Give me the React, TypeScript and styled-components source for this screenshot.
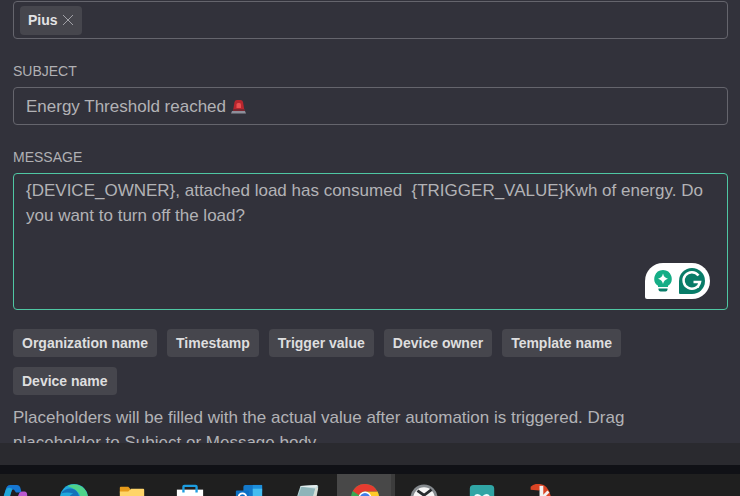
import React, { useState } from "react";
import styled, { createGlobalStyle } from "styled-components";

const GlobalStyle = createGlobalStyle`
  * { box-sizing: border-box; }
  body {
    margin: 0;
    background: #32323b;
    color: #b2b2b6;
    font-family: "Liberation Sans", Arial, sans-serif;
  }
  button, input, textarea { font: inherit; color: inherit; }
`;

const Screen = styled.div`
  height: 100vh;
  display: flex;
  flex-direction: column;
  overflow: hidden;
`;

const Form = styled.form`
  flex: 1;
  min-height: 0;
  overflow: hidden;
  display: flex;
  flex-direction: column;
  padding: 1px 12px 0 13px;
`;

const Label = styled.label`
  margin: 22px 0 6px;
  font-size: 14px;
  line-height: 20px;
  color: #b0b0b4;
`;

const Field = styled.div`
  display: flex;
  align-items: center;
  height: 38px;
  flex: none;
  padding: 0 6px;
  border: 1px solid #65656d;
  border-radius: 4px;
`;

const SubjectField = styled(Field)`
  padding: 2px 12px 0;
  gap: 5px;
`;

const Tag = styled.span`
  display: flex;
  align-items: center;
  gap: 4px;
  height: 29px;
  padding: 0 8px;
  border-radius: 4px;
  background: #46464d;
  color: #e2e2e4;
  font-size: 14px;
  font-weight: 700;
`;

const RemoveButton = styled.button`
  display: flex;
  padding: 0;
  border: 0;
  background: none;
  color: #a0a0a6;
`;

const RecipientInput = styled.input`
  flex: 1;
  min-width: 0;
  border: 0;
  outline: 0;
  background: none;
`;

const SubjectInput = styled.input`
  field-sizing: content;
  height: 26px;
  padding: 0;
  border: 0;
  outline: 0;
  background: none;
  font-size: 17px;
`;

const MessageBox = styled.div`
  position: relative;
  display: flex;
  flex: none;
`;

const MessageInput = styled.textarea`
  width: 100%;
  height: 137px;
  padding: 4px 12px;
  border: 1px solid #4fc7a3;
  border-radius: 4px;
  outline: 0;
  resize: none;
  background: none;
  font-size: 17px;
  line-height: 25px;
`;

const Assistant = styled.div`
  position: absolute;
  right: 18px;
  bottom: 11px;
  display: flex;
  align-items: center;
  gap: 7px;
  height: 36px;
  padding: 0 5px 0 9px;
  border-radius: 18px 18px 18px 2px;
  background: #ffffff;
`;

const AssistantButton = styled.button`
  display: flex;
  padding: 0;
  border: 0;
  background: none;
`;

const Chips = styled.div`
  display: flex;
  flex-wrap: wrap;
  gap: 10px;
  margin-top: 19px;
`;

const Chip = styled.button`
  height: 28px;
  padding: 0 9px;
  border: 0;
  border-radius: 4px;
  background: #46464d;
  color: #dededf;
  font-size: 14px;
  font-weight: 700;
`;

const Hint = styled.p`
  margin: 10px 0 0;
  max-width: 680px;
  font-size: 17px;
  line-height: 25px;
`;

const Footer = styled.div`
  flex: none;
  height: 22px;
  background: #2a2a2f;
`;

const WindowEdge = styled.div`
  flex: none;
  height: 9px;
  background: #101116;
`;

const Taskbar = styled.nav`
  flex: none;
  display: flex;
  height: 22px;
  margin-left: -13px;
  overflow: hidden;
  background: #1f1f1f;
`;

const TaskButton = styled.button<{ $active?: boolean }>`
  flex: none;
  width: 7.75%;
  display: flex;
  justify-content: center;
  height: 48px;
  padding: 10px 0 0 2px;
  border: 0;
  border-right: 4px solid ${(p) => (p.$active ? "#3c3c3c" : "transparent")};
  background: ${(p) => (p.$active ? "#484848" : "none")};
  background-clip: padding-box;
`;

const Siren = () => (
  <svg width="15" height="14" viewBox="0 0 15 14" role="img" aria-label="Siren">
    <path d="M2 11 3.500 2Q4 0 6 0h3.500Q11.500 0 12 2l1.500 9z" fill="#b8262e" />
    <path d="M5.500 8V4.500q0-1.500 1.500-1.500h1.500Q10 3 10 4.500V8z" fill="#ea4f50" />
    <path d="M2 9h11.500v2H2z" fill="#7c2730" />
    <path d="M1 11h13l1 2.500H0z" fill="#8d8f9b" />
  </svg>
);

const Bulb = () => (
  <svg width="18" height="22" viewBox="0 0 18 22" aria-hidden="true">
    <path d="M9 0a8.700 8.700 0 0 0-5 15.800V17h10v-1.200A8.700 8.700 0 0 0 9 0z" fill="#15ad86" />
    <path d="M9 3.500q1 4.500 5 5.200-4 .8-5 5.300-1-4.500-5-5.300 4-.7 5-5.200z" fill="#fff" />
    <path d="M4.500 18.500h9v1q0 2-2 2h-5q-2 0-2-2z" fill="#087c68" />
  </svg>
);

const Grammar = () => (
  <svg width="26" height="26" viewBox="0 0 26 26" aria-hidden="true">
    <path d="M13 0a13 13 0 1 1 0 26H1q-1 0-1-1V13A13 13 0 0 1 13 0z" fill="#087c68" />
    <path d="M19.500 7.500A8.300 8.300 0 1 0 21 14h-6.500M21 14l-2.500 5.500" fill="none" stroke="#fff" strokeWidth="2.500" />
  </svg>
);

const icons: { name: string; art: React.ReactNode }[] = [
  {
    name: "Copilot",
    art: (
      <>
        <path d="M3 16 6 6Q7 1 11 1h7q3 0 4 4l1 4h-6l-2-3q-2-1-3 2l-3 8z" fill="#1676d2" />
        <path d="M3 16 6 7q1-3 4-3l3 1-3 11z" fill="#20a7d8" />
        <path d="M18 16l2-5q1-3 4-3h2q3 0 3 4v5z" fill="#b958cf" />
      </>
    ),
  },
  {
    name: "Edge",
    art: (
      <>
        <circle cx="16" cy="15" r="15" fill="#21a9dc" />
        <path d="M9 2q7-3 14 0 8 4 8 15h-8Q24 7 9 2z" fill="#4fd38a" />
        <path d="M2 10q5-6 12-5 7 1 8 12H11q-1-5 4-7-6-2-13 0z" fill="#1472ba" />
      </>
    ),
  },
  {
    name: "File Explorer",
    art: (
      <>
        <path d="M3 4q0-1 1-1h8l2 2v4H3z" fill="#e79b1b" />
        <path d="M3 8h9l3-3h13q1 0 1 1v20H3z" fill="#ffd569" />
      </>
    ),
  },
  {
    name: "Store",
    art: (
      <>
        <path d="M2 6h28v20H2z" fill="#fff" />
        <path d="M9 9V3q0-1 1-1h12q1 0 1 1v6" fill="none" stroke="#1d9de0" strokeWidth="2.500" />
      </>
    ),
  },
  {
    name: "Outlook",
    art: (
      <>
        <path d="M10 3q0-2 2-2h17q1 0 1 1v18H10z" fill="#1479ca" />
        <path d="M20 1h10v7H20z" fill="#1d8fdc" />
        <path d="M20 5h10v11H20z" fill="#45bdf0" />
        <rect x="2" y="7" width="14" height="18" rx="1" fill="#0b70c6" />
        <circle cx="9" cy="14" r="4" fill="none" stroke="#fff" strokeWidth="2" />
      </>
    ),
  },
  {
    name: "Notepad",
    art: (
      <>
        <path d="M9 2 26 1q2 0 2 2l-5 18H3z" fill="#b7d5d8" />
        <path d="M10 3 25 5l-5 15H4z" fill="#8db4b9" />
        <path d="M9 2 27 1l-1 3-16-1z" fill="#e4eced" />
        <path d="M25 4h3l-3 16h-4z" fill="#d7ddd5" />
      </>
    ),
  },
  {
    name: "Chrome",
    art: (
      <>
        <circle cx="16" cy="15" r="15" fill="#37a853" />
        <path d="M16 8h13.300A15 15 0 0 1 16 30z" fill="#ffca28" />
        <path d="M3 7.500a15 15 0 0 1 26.300.5H16q-4 0-6.500 4z" fill="#e53c30" />
        <circle cx="16" cy="15" r="7" fill="#fff" />
        <circle cx="16" cy="15" r="5.500" fill="#3f7ee8" />
      </>
    ),
  },
  {
    name: "Clock",
    art: (
      <>
        <circle cx="16" cy="15" r="13" fill="#f4f4f4" stroke="#858a8e" strokeWidth="3" />
        <path d="m9 7 7 5 8-6M16 12v5" fill="none" stroke="#262a2d" strokeWidth="3" />
      </>
    ),
  },
  {
    name: "Arduino",
    art: (
      <>
        <rect x="3" y="1" width="26" height="26" rx="4" fill="#30a5a5" />
        <path d="M16 15q-6-6-8 0 2 6 8 0 6-6 8 0-2 6-8 0z" fill="none" stroke="#e9ffff" strokeWidth="2.500" />
      </>
    ),
  },
  {
    name: "Media tool",
    art: (
      <>
        <path d="M6 3q4-4 10-3 10 1 12 16H19V3l-4 4-9-1z" fill="#d94424" />
        <path d="M17.500 2v20" stroke="#f2f2f2" strokeWidth="4" />
        <path d="M25 8l-6 6" stroke="#f2f2f2" strokeWidth="3" />
      </>
    ),
  },
];

const placeholders = [
  "Organization name",
  "Timestamp",
  "Trigger value",
  "Device owner",
  "Template name",
  "Device name",
];

export default function App() {
  const [subject, setSubject] = useState("Energy Threshold reached");
  const [message, setMessage] = useState(
    "{DEVICE_OWNER}, attached load has consumed  {TRIGGER_VALUE}Kwh of energy. Do you want to turn off the load?"
  );

  return (
    <Screen>
      <GlobalStyle />
      <Form onSubmit={(e) => e.preventDefault()}>
        <Field>
          <Tag>
            Pius
            <RemoveButton type="button" aria-label="Remove Pius">
              <svg width="12" height="12" viewBox="0 0 12 12">
                <path d="m1 1 10 10M11 1 1 11" stroke="currentColor" />
              </svg>
            </RemoveButton>
          </Tag>
          <RecipientInput aria-label="Recipients" />
        </Field>
        <Label htmlFor="subject">SUBJECT</Label>
        <SubjectField>
          <SubjectInput id="subject" value={subject} onChange={(e) => setSubject(e.target.value)} />
          <Siren />
        </SubjectField>
        <Label htmlFor="message">MESSAGE</Label>
        <MessageBox>
          <MessageInput
            id="message"
            spellCheck={false}
            value={message}
            onChange={(e) => setMessage(e.target.value)}
          />
          <Assistant>
            <AssistantButton type="button" aria-label="Suggestions">
              <Bulb />
            </AssistantButton>
            <AssistantButton type="button" aria-label="Check writing">
              <Grammar />
            </AssistantButton>
          </Assistant>
        </MessageBox>
        <Chips>
          {placeholders.map((name) => (
            <Chip type="button" draggable key={name}>
              {name}
            </Chip>
          ))}
        </Chips>
        <Hint>
          Placeholders will be filled with the actual value after automation is triggered. Drag placeholder to
          Subject or Message body.
        </Hint>
      </Form>
      <Footer />
      <WindowEdge />
      <Taskbar aria-label="Taskbar">
        {icons.map(({ name, art }) => (
          <TaskButton key={name} type="button" aria-label={name} $active={name === "Chrome"}>
            <svg width="30" height="30" viewBox="0 0 32 32" aria-hidden="true">
              {art}
            </svg>
          </TaskButton>
        ))}
      </Taskbar>
    </Screen>
  );
}
